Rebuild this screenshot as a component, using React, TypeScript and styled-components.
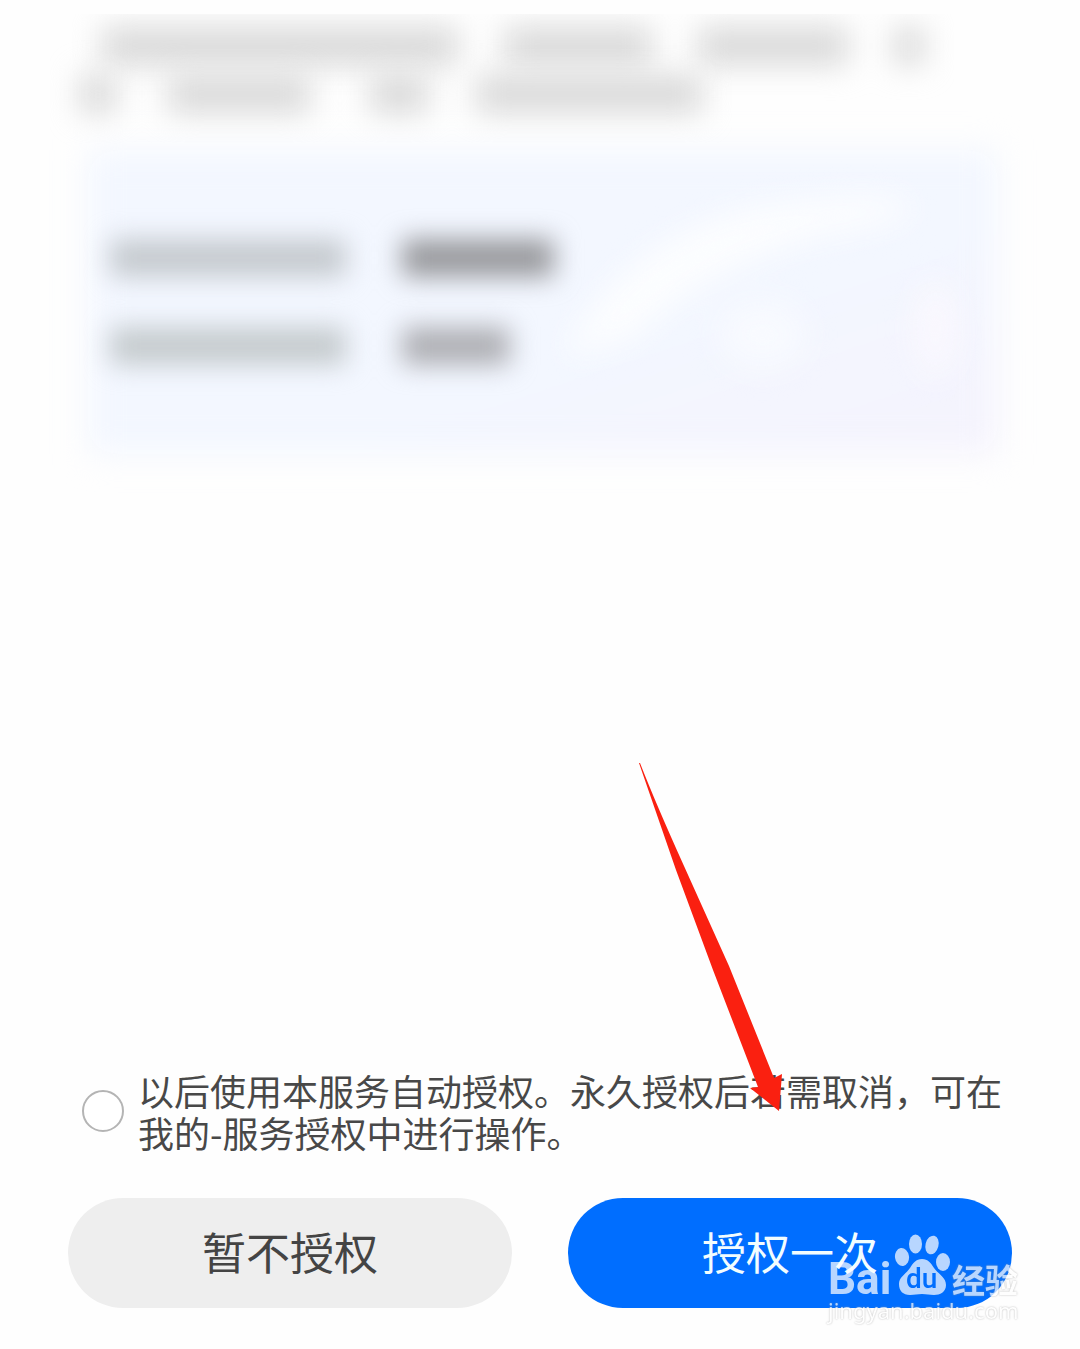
import React from "react";
import styled, { createGlobalStyle } from "styled-components";

const GlobalStyle = createGlobalStyle`
  * { box-sizing: border-box; }
  body {
    margin: 0;
    background: #fefefe;
    font-family: "Noto Sans CJK SC", sans-serif;
  }
`;

const Page = styled.main`
  display: flex;
  flex-direction: column;
  min-height: 100vh;
  padding: 14px 68px 41px;
`;

const Notice = styled.section`
  overflow: hidden;
  margin: 0 -20px;
  padding: 8px 32px 26px;
`;

const NoticeLine = styled.div`
  display: flex;
  height: 48px;
  align-items: center;
  filter: blur(15px);
`;

const Masked = styled.span<{ $gap: number; $width: number; $tone: string }>`
  flex: none;
  width: ${(p) => p.$width}px;
  height: 38px;
  margin-left: ${(p) => p.$gap}px;
  background: ${(p) => p.$tone};
`;

const Card = styled.section`
  position: relative;
  display: flex;
  flex-direction: column;
  justify-content: center;
  gap: 50px;
  height: 304px;
  margin: 6px 14px 0 20px;
  padding: 0 22px;
`;

const CardGlow = styled.svg`
  position: absolute;
  inset: 0;
  width: 100%;
  height: 100%;
  overflow: visible;
`;

const CardRow = styled.div`
  position: relative;
  display: flex;
  filter: blur(13px);
`;

const Footer = styled.footer`
  position: relative;
  display: flex;
  flex-direction: column;
  gap: 45px;
  margin-top: auto;
`;

const Consent = styled.label`
  display: flex;
  align-items: center;
  gap: 14px;
  padding-left: 14px;
  color: #484848;
  font-size: 36px;
  font-weight: 400;
  line-height: 42px;
`;

const Radio = styled.input`
  appearance: none;
  flex: none;
  width: 42px;
  height: 42px;
  margin: 0;
  border: 2px solid #b4b4b4;
  border-radius: 50%;
  background: #fff;
  &:checked { border: 12px solid #006eff; }
`;

const Actions = styled.div`
  position: relative;
  display: grid;
  grid-template-columns: 1fr 1fr;
  gap: 56px;
`;

const Button = styled.button<{ $primary?: boolean }>`
  height: 110px;
  padding: 0 0 4px;
  border: 0;
  border-radius: 55px;
  background: ${(p) => (p.$primary ? "#006eff" : "#eeeeee")};
  color: ${(p) => (p.$primary ? "#f2fdff" : "#444444")};
  font-family: inherit;
  font-size: 44px;
  font-weight: 400;
  line-height: 64px;
`;

const Arrow = styled.svg`
  position: absolute;
  right: 226px;
  bottom: 196px;
  width: 148px;
  height: 350px;
  pointer-events: none;
`;

const Watermark = styled.div`
  position: absolute;
  right: -10px;
  bottom: -16px;
  width: 194px;
  color: #fff;
  opacity: 0.72;
  text-shadow: 0 0 2px #999;
  pointer-events: none;
`;

const Brand = styled.div`
  display: flex;
  align-items: flex-end;
  height: 62px;
`;

const Latin = styled.span`
  width: 66px;
  font: 700 44px/34px Roboto, sans-serif;
  text-shadow: none;
`;

const Paw = styled.svg`
  flex: none;
  width: 56px;
  height: 62px;
  margin-right: 2px;
  text-shadow: none;
`;

const Han = styled.span`
  font-size: 33px;
  font-weight: 700;
  line-height: 34px;
  white-space: nowrap;
`;

const Site = styled.div`
  font: 400 22px/28px "Noto Sans", sans-serif;
  white-space: nowrap;
`;

type Segment = [gap: number, width: number];

const noticeLines: Segment[][] = [
  [[22, 356], [46, 148], [46, 150], [46, 30]],
  [[0, 36], [52, 142], [60, 58], [48, 226]],
];

const cardRows = [
  { label: "#c5cacf", value: "#98999d", width: 152 },
  { label: "#c5cbce", value: "#aeafb4", width: 108 },
];

export default function App() {
  return (
    <>
      <GlobalStyle />
      <Page>
        <Notice aria-hidden="true">
          {noticeLines.map((line, i) => (
            <NoticeLine key={i}>
              {line.map(([gap, width], j) => (
                <Masked key={j} $gap={gap} $width={width} $tone="#d9d9d9" />
              ))}
            </NoticeLine>
          ))}
        </Notice>

        <Card aria-hidden="true">
          <CardGlow viewBox="0 0 904 306" preserveAspectRatio="none">
            <defs>
              <linearGradient id="cardFill" x1="0" y1="0" x2="1" y2="1">
                <stop offset="0.6" stopColor="#f3f7ff" />
                <stop offset="1" stopColor="#f5f3fd" />
              </linearGradient>
              <filter id="soft" x="-20%" y="-30%" width="140%" height="160%" colorInterpolationFilters="sRGB">
                <feGaussianBlur stdDeviation="16" />
              </filter>
            </defs>
            <rect width="904" height="306" fill="url(#cardFill)" filter="url(#soft)" />
            <g filter="url(#soft)">
              <path d="M470 210Q530 90 660 58Q780 38 815 52Q840 68 740 84Q620 110 540 190Z" fill="#fcfdff" />
              <ellipse cx="670" cy="186" rx="44" ry="34" fill="#f8faff" />
              <ellipse cx="842" cy="180" rx="20" ry="50" fill="#faf8fe" />
            </g>
          </CardGlow>
          {cardRows.map((row) => (
            <CardRow key={row.width}>
              <Masked $gap={0} $width={236} $tone={row.label} />
              <Masked $gap={56} $width={row.width} $tone={row.value} />
            </CardRow>
          ))}
        </Card>

        <Footer>
          <Consent>
            <Radio type="radio" name="autoAuthorize" />
            <span>以后使用本服务自动授权。永久授权后若需取消，可在我的-服务授权中进行操作。</span>
          </Consent>
          <Actions>
            <Button type="button">暂不授权</Button>
            <Button type="button" $primary>授权一次</Button>
            <Watermark>
              <Brand>
                <Latin>Bai</Latin>
                <Paw viewBox="0 0 56 62" aria-hidden="true">
                  <g fill="#fff">
                    <ellipse cx="8" cy="23" rx="7" ry="9" transform="rotate(-8 8 23)" />
                    <ellipse cx="21.5" cy="10" rx="6.5" ry="9.5" />
                    <ellipse cx="38" cy="11" rx="6.5" ry="9.5" transform="rotate(14 38 11)" />
                    <ellipse cx="49" cy="28" rx="7" ry="9" />
                    <path d="M28 25C34 25 37 29 40 34C44 40 52 43 52 51C52 58 46 61 40 61C35 61 33 60 28 60C23 60 21 61 16 61C9 61 5 57 5 50C5 43 12 40 16 34C19 29 22 25 28 25Z" />
                  </g>
                  <text x="12" y="54" fill="#006eff" fontFamily="Roboto, sans-serif" fontSize="28" fontWeight="500">du</text>
                </Paw>
                <Han>经验</Han>
              </Brand>
              <Site>jingyan.baidu.com</Site>
            </Watermark>
          </Actions>
          <Arrow viewBox="0 0 148 350" aria-hidden="true">
            <path d="M1 1L2 1Q18 42 46 104L91 204L136 316L144 312L141 349L112 326L120 325L75 208L38 108Z" fill="#fa2010" />
          </Arrow>
        </Footer>
      </Page>
    </>
  );
}
